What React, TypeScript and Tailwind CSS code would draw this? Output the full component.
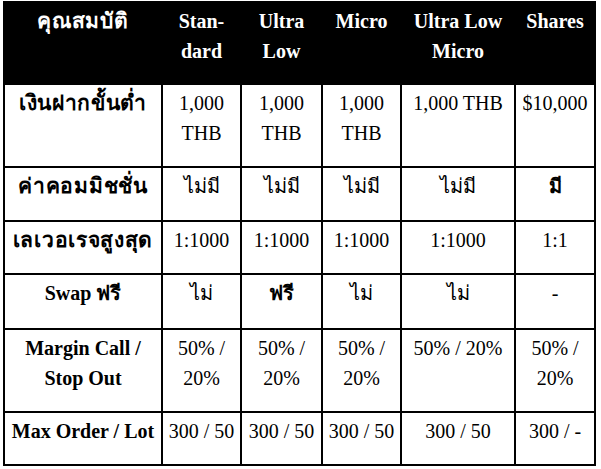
import React from 'react'

type Cell = { t: React.ReactNode; b?: boolean }

// Thai bold text in the source renders a bit wider
const Th = ({ children }: { children: React.ReactNode }) => (
  <span className="text-[21px] leading-[30px] tracking-[0.7px]">{children}</span>
)

const head: React.ReactNode[] = [
  <Th>คุณสมบัติ</Th>,
  <>Stan-<br />dard</>,
  <>Ultra<br />Low</>,
  'Micro',
  <>Ultra Low<br />Micro</>,
  'Shares',
]

const widths = ['w-[158px]', 'w-[79px]', 'w-[81px]', 'w-[79px]', 'w-[114px]', 'w-[80px]']

// each row: label, height class, cells
const rows: { label: React.ReactNode; h: string; cells: Cell[] }[] = [
  {
    label: <Th>เงินฝากขั้นต่ำ</Th>,
    h: 'h-[83px]',
    cells: [
      { t: <>1,000<br />THB</> },
      { t: <>1,000<br />THB</> },
      { t: <>1,000<br />THB</> },
      { t: '1,000 THB' },
      { t: '$10,000' },
    ],
  },
  {
    label: <Th>ค่าคอมมิชชั่น</Th>,
    h: 'h-[54px]',
    cells: [{ t: 'ไม่มี' }, { t: 'ไม่มี' }, { t: 'ไม่มี' }, { t: 'ไม่มี' }, { t: 'มี', b: true }],
  },
  {
    label: <Th>เลเวอเรจสูงสุด</Th>,
    h: 'h-[53px]',
    cells: [{ t: '1:1000' }, { t: '1:1000' }, { t: '1:1000' }, { t: '1:1000' }, { t: '1:1' }],
  },
  {
    label: 'Swap ฟรี',
    h: 'h-[55px]',
    cells: [{ t: 'ไม่' }, { t: 'ฟรี', b: true }, { t: 'ไม่' }, { t: 'ไม่' }, { t: '-' }],
  },
  {
    label: <>Margin Call /<br />Stop Out</>,
    h: 'h-[83px]',
    cells: [
      { t: <>50% /<br />20%</> },
      { t: <>50% /<br />20%</> },
      { t: <>50% /<br />20%</> },
      { t: '50% / 20%' },
      { t: <>50% /<br />20%</> },
    ],
  },
  {
    label: 'Max Order / Lot',
    h: 'h-[53px]',
    cells: [{ t: '300 / 50' }, { t: '300 / 50' }, { t: '300 / 50' }, { t: '300 / 50' }, { t: '300 / -' }],
  },
]

const cell = "align-top text-center px-[2px] pt-[3px] border-2 border-black whitespace-nowrap font-['Liberation_Serif','Times_New_Roman',serif]"

export default function App() {
  return (
    <div className="w-[601px] h-[469px] bg-white pt-[1px] pl-[3px] overflow-hidden font-['Liberation_Serif','Times_New_Roman',serif]">
      <table className="table-fixed border-collapse text-[20px] leading-[30px] text-black">
        <thead>
          <tr className="h-[82px] bg-black">
            {head.map((h, i) => (
              <th key={i} className={`${widths[i]} ${cell} font-bold text-white`}>
                {h}
              </th>
            ))}
          </tr>
        </thead>
        <tbody>
          {rows.map((r, ri) => (
            <tr key={ri} className={r.h}>
              <td className={`${cell} font-bold`}>{r.label}</td>
              {r.cells.map((c, ci) => (
                <td key={ci} className={`${cell} ${c.b ? 'font-bold' : 'font-normal'}`}>
                  {c.t}
                </td>
              ))}
            </tr>
          ))}
        </tbody>
      </table>
    </div>
  )
}
